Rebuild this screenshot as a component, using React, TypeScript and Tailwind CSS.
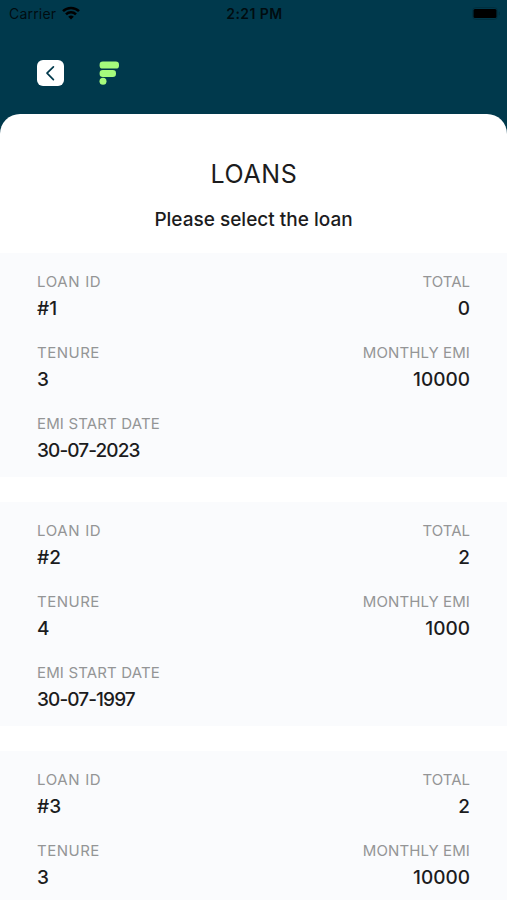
import clsx from "clsx";

type Loan = {
  id: number;
  total: number;
  tenure: number;
  monthlyEmi: number;
  emiStartDate?: string;
};

type FieldProps = {
  label: string;
  value: string | number;
  labelClassName?: string;
  valueClassName?: string;
  alignRight?: boolean;
};

const loans: Loan[] = [
  { id: 1, total: 0, tenure: 3, monthlyEmi: 10000, emiStartDate: "30-07-2023" },
  { id: 2, total: 2, tenure: 4, monthlyEmi: 1000, emiStartDate: "30-07-1997" },
  { id: 3, total: 2, tenure: 3, monthlyEmi: 10000 },
];

function StatusBar() {
  return (
    <div className="grid h-[26px] grid-cols-3 items-center pl-[9px] pr-[7px] text-[14px] text-black/80">
      <div className="flex items-center gap-[6px]">
        <span className="tracking-[0.2px]">Carrier</span>
        <svg width="18" height="14" viewBox="0 0 18 14" fill="none" stroke="black" strokeWidth="2.5">
          <path d="M1 5.2a11.3 11.3 0 0 1 16 0" />
          <path d="M4 8.4a7 7 0 0 1 10 0" />
          <path d="M9 13.6 6.2 10.8a4 4 0 0 1 5.6 0Z" fill="black" stroke="none" />
        </svg>
      </div>
      <span className="text-center font-semibold tracking-[0.45px]">2:21 PM</span>
      <div className="flex justify-end">
        <svg width="28" height="13" viewBox="0 0 28 13">
          <rect x="0.5" y="0.5" width="25" height="12" rx="3.5" fill="none" stroke="black" strokeOpacity="0.15" />
          <rect x="1.5" y="2" width="23" height="9" rx="1.5" fill="black" />
          <path d="M26.6 4.5v4a2 2 0 0 0 0-4Z" fill="black" fillOpacity="0.15" />
        </svg>
      </div>
    </div>
  );
}

function Header() {
  return (
    <header className="flex h-[88px] items-start gap-[35px] pl-[37px] pt-[34px]">
      <button type="button" aria-label="Back" className="flex h-[26px] w-[27px] items-center justify-center rounded-md bg-white">
        <svg width="27" height="26" viewBox="0 0 27 26" fill="none" stroke="#00394c" strokeWidth="1.7" strokeLinecap="round" strokeLinejoin="round">
          <path d="M16.4 6.8 10 13.2l6.4 6.4" />
        </svg>
      </button>
      <svg width="21" height="27" viewBox="0 0 21 27" fill="#a5fb7c">
        <rect x="0.6" y="1.6" width="19.4" height="7" rx="3.2" />
        <rect x="0.6" y="10" width="16.4" height="7" rx="3.2" />
        <circle cx="4" cy="21.3" r="3.5" />
      </svg>
    </header>
  );
}

function Field({ label, value, labelClassName, valueClassName, alignRight }: FieldProps) {
  return (
    <div className={clsx("flex flex-col", alignRight && "items-end")}>
      <span className={clsx("text-[15px] leading-[27px] text-[#949596]", labelClassName)}>{label}</span>
      <span className={clsx("text-[19px] font-medium leading-[27px] text-[#1c1c1d]", valueClassName)}>{value}</span>
    </div>
  );
}

function LoanCard({ loan }: { loan: Loan }) {
  return (
    <li className="flex h-[224px] shrink-0 flex-col gap-[17px] bg-[#fafbfd] px-[37px] pt-[15px]">
      <div className="flex justify-between">
        <Field label="LOAN ID" value={`#${loan.id}`} labelClassName="tracking-[0.65px]" />
        <Field label="TOTAL" value={loan.total} alignRight />
      </div>
      <div className="flex justify-between">
        <Field label="TENURE" value={loan.tenure} labelClassName="tracking-[0.5px]" />
        <Field label="MONTHLY EMI" value={loan.monthlyEmi} labelClassName="tracking-[0.1px]" alignRight />
      </div>
      {loan.emiStartDate ? (
        <Field
          label="EMI START DATE"
          value={loan.emiStartDate}
          labelClassName="tracking-[0.15px]"
          valueClassName="tracking-[-0.9px]"
        />
      ) : null}
    </li>
  );
}

export default function App() {
  return (
    <div className="flex h-[900px] w-[507px] flex-col overflow-hidden bg-[#00394c] font-['Inter',sans-serif]">
      <StatusBar />
      <Header />
      <main className="flex min-h-0 flex-1 flex-col overflow-hidden rounded-t-[20px] bg-white pt-[42px]">
        <h1 className="pl-px text-center text-[25px] leading-9 tracking-[0.6px] text-[#1c1c1d]">LOANS</h1>
        <p className="mt-[14px] text-center text-[19px] font-medium leading-7 text-[#1c1c1d]">Please select the loan</p>
        <ul className="mt-[19px] flex flex-col gap-[25px]">
          {loans.map((loan) => (
            <LoanCard key={loan.id} loan={loan} />
          ))}
        </ul>
      </main>
    </div>
  );
}
